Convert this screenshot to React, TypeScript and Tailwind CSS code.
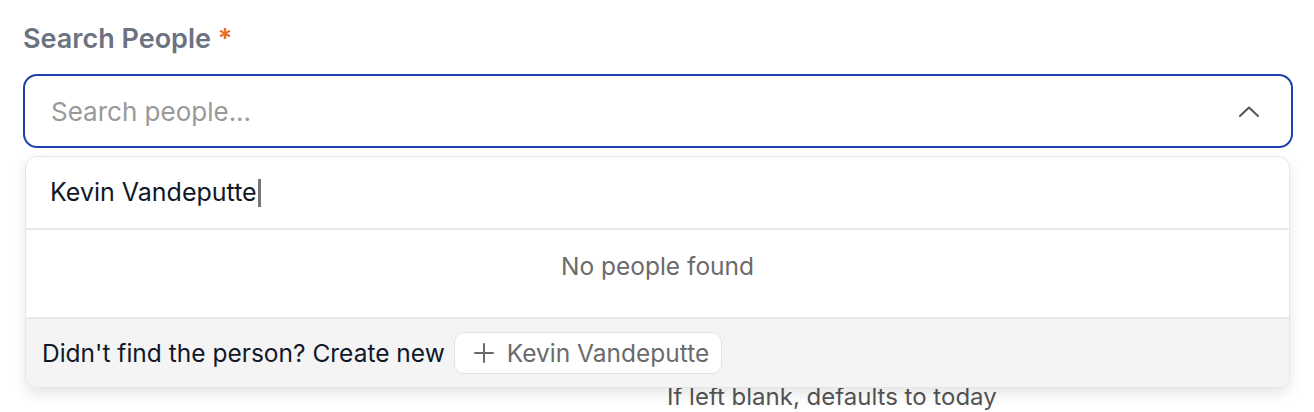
import React from 'react';

const query = 'Kevin Vandeputte';

export default function App() {
    const people: string[] = [];
    const matches = people.filter(p => p.toLowerCase().includes(query.toLowerCase()));

    return (
        <div className="min-h-screen bg-white pl-[23px] pr-[21px] pt-[20px] font-['Inter',sans-serif]">
            {/* Search field with open popover */}
            <div className="relative">
                <label className="block text-[27px] leading-[38px] font-semibold text-[#6b7280]">
                    Search People <span className="text-[#ea6a1f]">*</span>
                </label>
                <div className="mt-[16px] flex h-[74px] items-center justify-between rounded-[14px] border-2 border-[#1e40af] pl-[26px] pr-[32px]">
                    <span className="text-[26px] text-[#999999]">Search people...</span>
                    <svg width="20" height="11" viewBox="0 0 20 11" fill="none" stroke="#555555" strokeWidth="2" strokeLinecap="round" strokeLinejoin="round">
                        <polyline points="1,10 10,1.5 19,10" />
                    </svg>
                </div>

                <div className="absolute left-[2px] right-[3px] top-[136px] z-10 overflow-hidden rounded-[12px] border border-[#e5e7eb] bg-white shadow-[0_6px_14px_rgba(0,0,0,0.10)]">
                    <div className="flex h-[73px] items-center border-b-2 border-[#e8e8e8] px-[24px]">
                        <span className="text-[25px] text-[#111827]">{query}</span>
                        <span className="ml-px h-[28px] w-[3px] bg-[#777777]" />
                    </div>
                    {matches.length === 0 && (
                        <div className="flex h-[87px] justify-center pt-[18px] text-[24.5px] text-[#6b6b6b]">
                            No people found
                        </div>
                    )}
                    <div className="flex h-[70px] items-center gap-[9px] border-t-2 border-[#e8e8e8] bg-[#f4f4f5] px-[16px]">
                        <span className="text-[24.5px] text-[#111827]">Didn't find the person? Create new</span>
                        <button className="flex h-[42px] items-center gap-[13px] rounded-[10px] border border-[#e3e3e3] bg-white pl-[19px] pr-[12px] text-[24.5px] text-[#6b6b6b]">
                            <svg width="20" height="20" viewBox="0 0 20 20" fill="none" stroke="currentColor" strokeWidth="2" strokeLinecap="round">
                                <path d="M10 1v18M1 10h18" />
                            </svg>
                            {query}
                        </button>
                    </div>
                </div>
            </div>

            {/* Date field helper, sitting under the popover */}
            <div className="grid grid-cols-2 gap-6 pt-[234px]">
                <div />
                <p className="-ml-[3px] text-[24px] leading-[30px] text-[#555555]">If left blank, defaults to today</p>
            </div>
        </div>
    );
}
